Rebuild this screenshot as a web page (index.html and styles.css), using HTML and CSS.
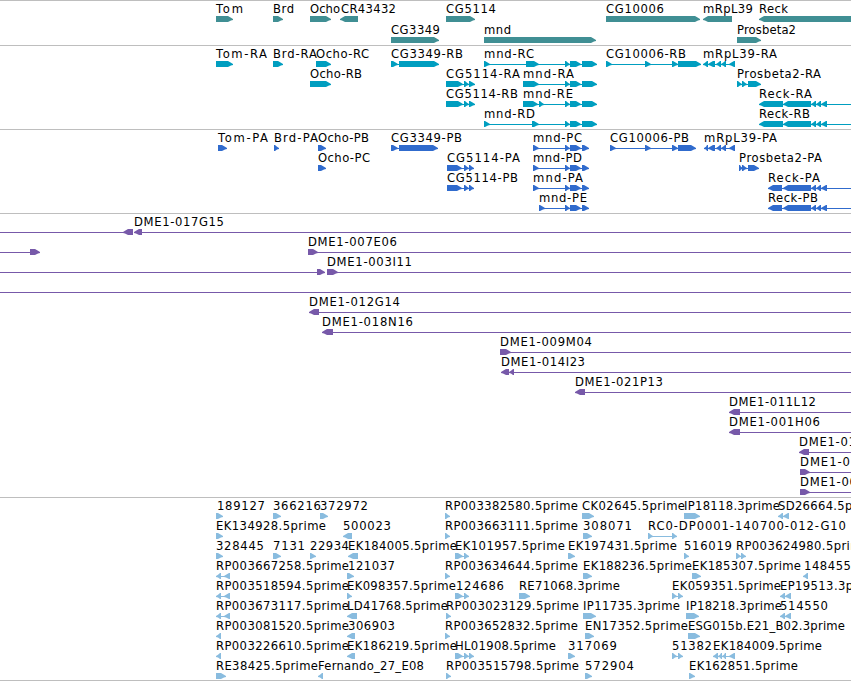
FILE: index.html
```html
<!DOCTYPE html>
<html lang="en">
<head>
  <meta charset="UTF-8">
  <meta name="viewport" content="width=device-width, initial-scale=1.0">
  <title>Region view</title>
  <link rel="stylesheet" href="styles.css">
</head>
<body>
  <main class="browser">
    <section class="track genes" id="genes"></section>
    <section class="track transcripts" id="transcripts"></section>
    <section class="track proteins" id="proteins"></section>
    <section class="track bacs" id="bacs"></section>
    <section class="track ests" id="ests"></section>
  </main>
  <script src="tracks.js"></script>
</body>
</html>
```

FILE: styles.css
```css
body {
  margin: 0;
  background-color: #fff;
  overflow: hidden;
}

.browser {
  display: flex;
  flex-direction: column;
  height: 681px;
  border-bottom: 1px solid #bebebe;
  box-sizing: border-box;
}

.track {
  box-sizing: border-box;
  border-top: 1px solid #bebebe;
  overflow: hidden;
}

.track svg {
  display: block;
  width: 100%;
  height: 100%;
}

.genes {
  height: 45px;
  color: #408f94;
}

.transcripts {
  height: 84px;
  color: #009ec0;
}

.proteins {
  height: 84px;
  color: #306bcd;
}

.bacs {
  height: 284px;
  color: #7759a9;
}

.ests {
  height: 183px;
  color: #89bcdf;
}

.label {
  font-family: "DejaVu Sans", Verdana, sans-serif;
  font-size: 11.6px;
  fill: #000;
}

.block,
.intron {
  fill: currentColor;
}

.intron {
  shape-rendering: crispEdges;
}
```

FILE: tracks.js
```js
// feature: [row, label, label start, label end, strand, blocks, line start, line end]
const mndEnd = [[565, 570], [570, 581], [582, 597]];
const mndCds = [[565, 570], [570, 581], [582, 589]];
const reckEnd = [[783, 811], [811, 816], [816, 821], [821, 827]];
const mrpl = [[708, 715], [716, 721], [721, 726], [729, 735]];

const tracks = {
  genes: { pitch: 21, features: [
    [0, "Tom", 216, 242, 1, [[216, 233]]],
    [0, "Brd", 273, 293, 1, [[273, 283]]],
    [0, "Ocho", 310, 339, 1, [[310, 331]]],
    [0, "CR43432", 341, 395, -1, [[340, 358]]],
    [0, "CG5114", 446, 495, 1, [[446, 475]]],
    [0, "CG10006", 606, 663, 1, [[606, 700]]],
    [0, "mRpL39", 703, 752, -1, [[703, 732]]],
    [0, "Reck", 759, 787, -1, [[759, 860]]],
    [1, "CG3349", 391, 439, 1, [[391, 439]]],
    [1, "mnd", 484, 510, 1, [[484, 596]]],
    [1, "Prosbeta2", 737, 795, 1, [[737, 761]]]
  ] },
  transcripts: { pitch: 20, features: [
    [0, "Tom-RA", 216, 266, 1, [[216, 233]]],
    [0, "Brd-RA", 273, 316, 1, [[273, 283]]],
    [0, "Ocho-RC", 316, 368, 1, [[316, 331]]],
    [0, "CG3349-RB", 391, 462, 1, [[391, 398], [399, 439]]],
    [0, "mnd-RC", 484, 533, 1, [[484, 490], [526, 539], ...mndEnd]],
    [0, "CG10006-RB", 606, 685, 1, [[606, 612], [645, 651], [672, 678], [678, 701]]],
    [0, "mRpL39-RA", 703, 776, -1, [[703, 708], ...mrpl]],
    [1, "Ocho-RB", 310, 361, 1, [[310, 331]]],
    [1, "CG5114-RA", 446, 519, 1, [[446, 463], [464, 469], [469, 475]]],
    [1, "mnd-RA", 523, 573, 1, [[523, 539], ...mndEnd]],
    [1, "Prosbeta2-RA", 737, 820, 1, [[737, 742], [742, 747], [748, 761]]],
    [2, "CG5114-RB", 446, 517, 1, [[446, 463], [464, 469], [469, 475]]],
    [2, "mnd-RE", 523, 572, 1, [[523, 538], [539, 544], ...mndEnd]],
    [2, "Reck-RA", 759, 811, -1, [[759, 783], ...reckEnd], 760, 860],
    [3, "mnd-RD", 484, 534, 1, [[484, 490], [532, 539], ...mndEnd]],
    [3, "Reck-RB", 759, 809, -1, [[759, 783], ...reckEnd], 760, 860]
  ] },
  proteins: { pitch: 20, features: [
    [0, "Tom-PA", 218, 267, 1, [[218, 227]]],
    [0, "Brd-PA", 274, 317, 1, [[274, 279]]],
    [0, "Ocho-PB", 318, 368, 1, [[318, 326]]],
    [0, "CG3349-PB", 391, 461, 1, [[391, 398], [399, 438]]],
    [0, "mnd-PC", 533, 581, 1, [[533, 539], ...mndCds]],
    [0, "CG10006-PB", 610, 688, 1, [[610, 616], [645, 651], [672, 678], [678, 696]]],
    [0, "mRpL39-PA", 704, 776, -1, [[704, 708], ...mrpl]],
    [1, "Ocho-PC", 318, 369, 1, [[318, 326]]],
    [1, "CG5114-PA", 447, 519, 1, [[447, 462], [464, 469], [469, 474]]],
    [1, "mnd-PD", 533, 581, 1, [[533, 539], ...mndCds]],
    [1, "Prosbeta2-PA", 739, 821, 1, [[739, 743], [742, 747], [748, 759]]],
    [2, "CG5114-PB", 447, 517, 1, [[447, 462], [464, 469], [469, 474]]],
    [2, "mnd-PA", 533, 582, 1, [[533, 539], ...mndCds]],
    [2, "Reck-PA", 768, 819, -1, [[768, 782], ...reckEnd], 769, 860],
    [3, "mnd-PE", 539, 586, 1, [[539, 545], ...mndCds]],
    [3, "Reck-PB", 768, 817, -1, [[768, 782], ...reckEnd], 769, 860]
  ] },
  bacs: { pitch: 20, features: [
    [0, "", 0, 0, -1, [[123, 133]], 0, 133],
    [0, "DME1-017G15", 134, 223, -1, [[134, 142]], 136, 860],
    [1, "", 0, 0, 1, [[30, 40]], 0, 38],
    [1, "DME1-007E06", 308, 396, 1, [[308, 318]], 308, 860],
    [2, "", 0, 0, 1, [[317, 325]], 0, 323],
    [2, "DME1-003I11", 327, 411, 1, [[327, 338]], 327, 860],
    [3, "", 0, 0, 1, [], 0, 860],
    [4, "DME1-012G14", 309, 399, -1, [[309, 319]], 311, 860],
    [5, "DME1-018N16", 322, 412, -1, [[322, 333]], 324, 860],
    [6, "DME1-009M04", 500, 591, 1, [[500, 511]], 500, 860],
    [7, "DME1-014I23", 501, 584, -1, [[501, 509], [509, 514]], 503, 860],
    [8, "DME1-021P13", 575, 662, -1, [[575, 585]], 577, 860],
    [9, "DME1-011L12", 729, 815, -1, [[729, 740]], 731, 860],
    [10, "DME1-001H06", 729, 819, -1, [[729, 740]], 731, 860],
    [11, "DME1-01", 799, 855, -1, [[799, 809]], 801, 860],
    [12, "DME1-0", 800, 849, 1, [[800, 810]], 800, 860],
    [13, "DME1-00", 800, 856, 1, [[800, 810]], 800, 860]
  ] },
  ests: { pitch: 20, features: [
    [0, "189127", 217, 264, 1, [[216, 223]]],
    [0, "366216", 273, 320, 1, [[273, 281]]],
    [0, "372972", 320, 367, 1, [[320, 328]]],
    [0, "RP003382580.5prime", 445, 577, 1, [[445, 450]]],
    [0, "CK02645.5prime", 582, 684, 1, [[582, 594]]],
    [0, "IP18118.3prime", 684, 779, 1, [[684, 700]]],
    [0, "SD26664.5prime", 778, 879, -1, [[778, 783], [783, 789]]],
    [1, "EK134928.5prime", 216, 325, 1, [[216, 223]]],
    [1, "500023", 343, 390, -1, [[343, 352]]],
    [1, "RP003663111.5prime", 445, 577, 1, [[445, 450]]],
    [1, "308071", 583, 631, 1, [[583, 592]]],
    [1, "RC0-DP0001-140700-012-G10", 648, 845, 1, [[648, 653], [672, 677]]],
    [2, "328445", 216, 263, 1, [[216, 223]]],
    [2, "7131", 273, 304, 1, [[273, 281]]],
    [2, "22934", 310, 348, 1, [[310, 316]]],
    [2, "EK184005.5prime", 348, 456, -1, [[348, 358]]],
    [2, "EK101957.5prime", 455, 564, 1, [[455, 463], [464, 469]]],
    [2, "EK197431.5prime", 568, 676, 1, [[568, 575]]],
    [2, "516019", 684, 731, 1, [[684, 689]]],
    [2, "RP003624980.5prime", 736, 868, 1, [[736, 741], [741, 746]]],
    [3, "RP003667258.5prime", 216, 348, -1, [[216, 221], [224, 230]]],
    [3, "121037", 348, 394, 1, [[347, 354]]],
    [3, "RP003634644.5prime", 445, 577, 1, [[445, 450]]],
    [3, "EK188236.5prime", 583, 691, 1, [[583, 592]]],
    [3, "EK185307.5prime", 692, 800, 1, [[692, 701]]],
    [3, "148455", 804, 850, -1, [[803, 808]]],
    [4, "RP003518594.5prime", 216, 348, -1, [[216, 221], [224, 230]]],
    [4, "EK098357.5prime", 347, 455, 1, [[347, 352]]],
    [4, "124686", 456, 503, 1, [[455, 463], [464, 469]]],
    [4, "RE71068.3prime", 519, 619, 1, [[519, 530]]],
    [4, "EK059351.5prime", 672, 780, 1, [[672, 677], [678, 683]]],
    [4, "EP19513.3prime", 780, 880, -1, [[780, 785], [785, 791]]],
    [5, "RP003673117.5prime", 216, 348, -1, [[216, 221], [224, 230]]],
    [5, "LD41768.5prime", 347, 447, -1, [[347, 357]]],
    [5, "RP003023129.5prime", 446, 578, 1, [[446, 451]]],
    [5, "IP11735.3prime", 583, 679, 1, [[583, 596]]],
    [5, "IP18218.3prime", 686, 781, 1, [[686, 699]]],
    [5, "514550", 780, 827, -1, [[780, 785], [785, 791]]],
    [6, "RP003081520.5prime", 216, 348, -1, [[216, 221]]],
    [6, "306903", 348, 394, -1, [[347, 355]]],
    [6, "RP003652832.5prime", 445, 577, 1, [[445, 450]]],
    [6, "EN17352.5prime", 585, 687, 1, [[585, 594]]],
    [6, "ESG015b.E21_B02.3prime", 688, 844, 1, [[688, 700]]],
    [7, "RP003226610.5prime", 216, 348, -1, [[216, 221]]],
    [7, "EK186219.5prime", 347, 456, -1, [[347, 355]]],
    [7, "HL01908.5prime", 455, 555, 1, [[455, 463], [464, 469], [469, 474]]],
    [7, "317069", 568, 616, 1, [[568, 575]]],
    [7, "51382", 672, 711, 1, [[672, 677], [678, 683]]],
    [7, "EK184009.5prime", 713, 821, -1, [[713, 718], [718, 722], [722, 726], [729, 735]]],
    [8, "RE38425.5prime", 216, 317, 1, [[216, 226]]],
    [8, "Fernando_27_E08", 318, 423, -1, [[318, 323]]],
    [8, "RP003515798.5prime", 446, 578, 1, [[446, 451]]],
    [8, "572904", 585, 633, 1, [[585, 592]]],
    [8, "EK162851.5prime", 689, 797, 1, [[689, 695]]]
  ] }
};

const SVG = "http://www.w3.org/2000/svg";

function add(parent, name, attrs) {
  const el = document.createElementNS(SVG, name);
  for (const key in attrs) {
    el.setAttribute(key, attrs[key]);
  }
  parent.appendChild(el);
  return el;
}

// box with a blunt pointed end on the side the strand runs to
function blockPoints(x1, x2, y, strand) {
  const tip = Math.min(5, x2 - x1 - 1);
  const back = strand > 0 ? x1 : x2;
  const front = strand > 0 ? x2 : x1;
  return [
    [back, y],
    [front - strand * tip, y],
    [front - strand * 2, y + 1.8],
    [front, y + 3],
    [front, y + 4],
    [front - strand * 2, y + 4.6],
    [front - strand * tip, y + 6],
    [back, y + 6]
  ].map(p => p.join(",")).join(" ");
}

for (const id in tracks) {
  const track = tracks[id];
  const svg = add(document.getElementById(id), "svg", {});

  for (const [row, label, start, end, strand, blocks, from, to] of track.features) {
    const y = row * track.pitch + 15;
    if (from !== undefined || blocks.length > 1) {
      const x1 = from !== undefined ? from : blocks[0][0] + 1;
      const x2 = to !== undefined ? to : blocks[blocks.length - 1][1] - 1;
      add(svg, "rect", { class: "intron", x: x1, y: y + 3, width: x2 - x1, height: 1 });
    }
    for (const [x1, x2] of blocks) {
      add(svg, "polygon", { class: "block", points: blockPoints(x1, x2, y, strand) });
    }
    if (label) {
      const text = add(svg, "text", { class: "label", x: start, y: y - 3, textLength: end - start + 1 });
      text.textContent = label;
    }
  }
}
```
